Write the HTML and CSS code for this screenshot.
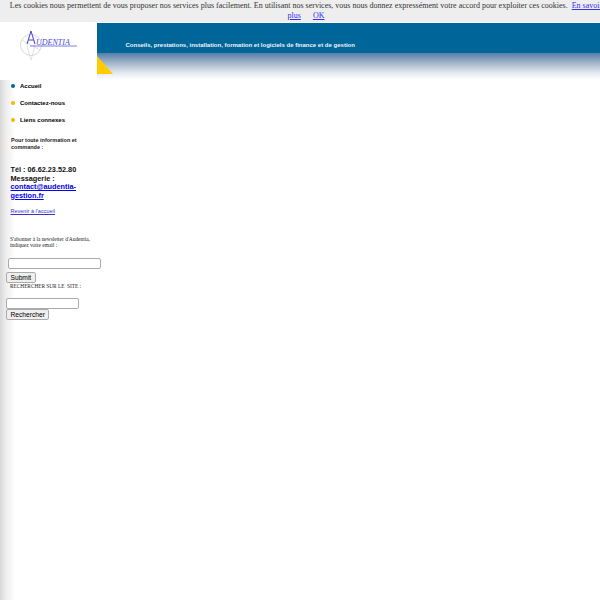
FILE: index.html
```html
<!DOCTYPE html>
<html lang="fr">
<head>
<meta charset="utf-8">
<title>Audentia</title>
<link rel="stylesheet" href="styles.css">
</head>
<body>
<div class="cookie">Les cookies nous permettent de vous proposer nos services plus facilement. En utilisant nos services, vous nous donnez expressément votre accord pour exploiter ces cookies. &nbsp;<a href="#">En savoir plus</a> &nbsp;&nbsp;&nbsp; <a class="ok" href="#">OK</a></div>
<header class="header">
  <div class="logo">
    <svg width="60" height="36" viewBox="0 0 60 36" aria-hidden="true">
      <circle cx="11" cy="16" r="10.5" fill="none" stroke="#cfcfcf" stroke-width="0.8"/>
      <path d="M11 2 L7 17 L11 31 L15 17 Z M2 11 L20 21" fill="none" stroke="#cfcfcf" stroke-width="0.6"/>
      <path d="M7 15 L11 2 L15 15 M8.5 11 H14" fill="none" stroke="#4a4ad8" stroke-width="1"/>
      <path d="M10 17 H57" fill="none" stroke="#5a5ae0" stroke-width="0.8"/>
      <text x="16" y="16" class="logo-text">UDENTIA</text>
    </svg>
  </div>
  <div class="banner">
    <div class="banner-top"><span>Conseils, prestations, installation, formation et logiciels de finance et de gestion</span></div>
    <div class="banner-fade"><svg class="corner" width="16" height="19" viewBox="0 0 16 19" aria-hidden="true"><path d="M0 1 L16 19 H0 Z" fill="#ffcc00"/></svg></div>
  </div>
</header>
<div class="main">
  <aside class="side">
    <nav class="nav">
      <div class="nav-item"><i class="dot blue"></i><a href="#">Accueil</a></div>
      <div class="nav-item"><i class="dot"></i><a href="#">Contactez-nous</a></div>
      <div class="nav-item"><i class="dot"></i><a href="#">Liens connexes</a></div>
    </nav>
    <p class="info">Pour toute information et commande :</p>
    <p class="contact">Tél : 06.62.23.52.80<br>Messagerie :<br><a href="#">contact@audentia-gestion.fr</a></p>
    <p class="back"><a href="#">Revenir à l'accueil</a></p>
    <p class="news">S'abonner à la newsletter d'Audentia, indiquez votre email :</p>
    <input class="email" type="text">
    <button class="btn" type="button">Submit</button>
    <p class="search-label">RECHERCHER SUR LE&nbsp; SITE :</p>
    <input class="query" type="text">
    <button class="btn" type="button">Rechercher</button>
  </aside>
</div>
</body>
</html>
```
FILE: styles.css
```css
html, body { margin: 0; padding: 0; }
body {
  width: 600px;
  height: 600px;
  overflow: hidden;
  background: #fff;
  font-family: "Liberation Sans", Arial, sans-serif;
}
.cookie {
  box-sizing: border-box;
  width: 605px;
  height: 23px;
  padding: 1px 0 0 7px;
  background: #eeeeee;
  border-bottom: 1px solid #fff;
  color: #333;
  font: 8px/9.5px "Liberation Serif", serif;
  text-align: center;
}
.cookie a { color: #3333ee; }
.cookie .ok { margin-left: 2px; }
.header { display: flex; height: 57px; }
.logo { width: 97px; flex: none; padding: 6px 0 0 20px; box-sizing: border-box; }
.logo svg { display: block; }
.logo-text { font: italic 8px "Liberation Serif", serif; fill: #4a4ad8; }
.banner { flex: 1; display: flex; flex-direction: column; }
.banner-top {
  height: 30px;
  background: #006699;
  color: #eef4f8;
  font-size: 6px;
  font-weight: bold;
  padding: 18px 0 0 28.5px;
  box-sizing: border-box;
  line-height: 8px;
}
.banner-fade {
  flex: 1;
  background: linear-gradient(#557fa8 0, #9fb2c8 35%, #e6ebf1 75%, #fff 100%);
}
.corner { display: block; margin-top: 2px; }
.main {
  height: 520px;
  background: linear-gradient(90deg, #d8d8d8 0, #eeeeee 6px, #fff 15px);
}
.side { width: 110px; display: flex; flex-direction: column; align-items: flex-start; }
.nav { margin-top: -3px; padding-left: 11px; }
.nav-item { display: flex; align-items: center; height: 17px; font-size: 6px; font-weight: bold; }
.nav-item a { color: #000; text-decoration: none; }
.dot { width: 4px; height: 4px; border-radius: 50%; background: #eebb00; margin-right: 5px; }
.dot.blue { background: #006699; }
.side p { margin: 0; }
.info { font-size: 5.5px; font-weight: bold; line-height: 7px; color: #222; padding: 9px 0 0 11px; width: 78px; }
.contact { font-size: 7.3px; font-weight: bold; line-height: 8.5px; color: #111; margin-top: 15px !important; padding-left: 10.5px; width: 72px; }
.contact a { color: #0000ee; }
.back { font: 5.5px/7px "Liberation Sans", sans-serif; padding: 7.5px 0 0 10.5px; }
.back a { color: #3333cc; }
.news { font: 5.4px/6px "Liberation Serif", serif; color: #222; padding: 21px 0 0 10px; width: 84px; }
.email { box-sizing: border-box; width: 93px; height: 11px; margin: 10px 0 0 8px; padding: 0; border: 1px solid #aaa; border-radius: 2px; background: #fff; }
.btn { box-sizing: border-box; height: 11px; margin: 3px 0 0 6px; padding: 0 3.5px; border: 1px solid #aaa; border-radius: 2px; background: #efefef; color: #000; font: 6.67px/9px "Liberation Sans", sans-serif; }
.search-label { font: 5.3px/7px "Liberation Serif", serif; color: #222; padding: 0 0 0 10px; }
.query { box-sizing: border-box; width: 73px; height: 11px; margin: 8px 0 0 6px; padding: 0; border: 1px solid #aaa; border-radius: 2px; background: #fff; }
.query + .btn { margin-top: 0; }
```
